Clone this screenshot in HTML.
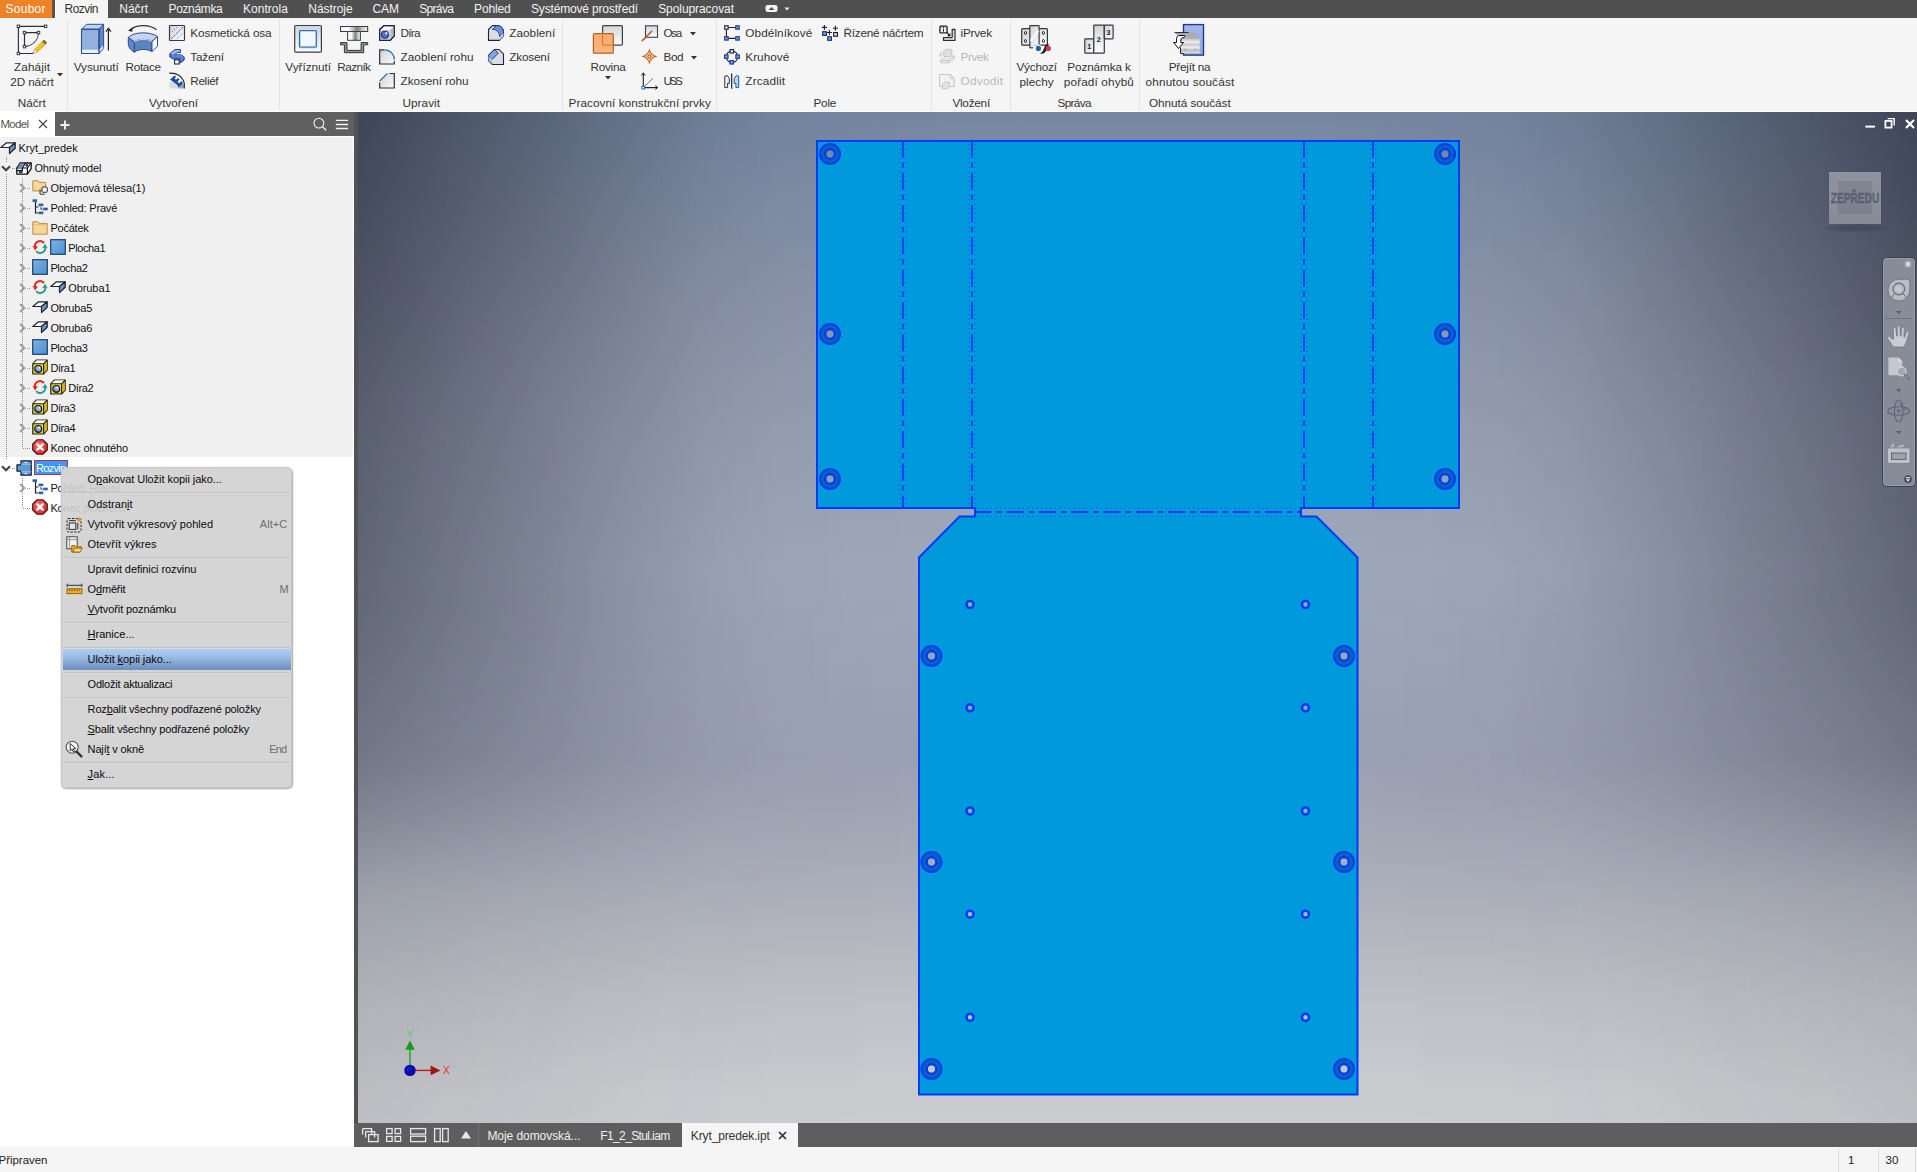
<!DOCTYPE html>
<html><head><meta charset="utf-8"><title>Autodesk Inventor</title>
<style>
*{margin:0;padding:0;box-sizing:border-box}
html,body{width:1917px;height:1172px;overflow:hidden}
body{position:relative;background:#f5f5f5;font-family:"Liberation Sans",sans-serif;color:#2a2a2a}
.t{position:absolute;white-space:nowrap}
.a{position:absolute}
svg{position:absolute;overflow:visible}
</style></head><body>

<div class="a" style="left:0;top:0;width:1917px;height:18px;background:#505050"></div>
<div class="a" style="left:0;top:0;width:52px;height:18px;background:#ee8226"></div>
<div class="a" style="left:52px;top:0;width:3px;height:18px;background:linear-gradient(to right,#8a5a30,#524e4a 60%,#505050)"></div>
<div class="a" style="left:55px;top:0;width:53px;height:19px;background:#f5f5f5;border-left:1px solid #fff"></div>
<div class="a" style="left:0;top:18px;width:1917px;height:93px;background:#f5f5f5"></div>
<div class="a" style="left:0;top:111px;width:1917px;height:1px;background:#fdfdfd"></div>
<span class="t" style="left:5.50px;top:2.16px;font-size:12px;line-height:14px;letter-spacing:0.261px;color:#fff;">Soubor</span>
<span class="t" style="left:64.50px;top:2.16px;font-size:12px;line-height:14px;letter-spacing:-0.536px;color:#333;">Rozvin</span>
<span class="t" style="left:119.20px;top:2.16px;font-size:12px;line-height:14px;letter-spacing:0.033px;color:#f2f2f2;">Náčrt</span>
<span class="t" style="left:168.50px;top:2.16px;font-size:12px;line-height:14px;letter-spacing:-0.356px;color:#f2f2f2;">Poznámka</span>
<span class="t" style="left:243.00px;top:2.16px;font-size:12px;line-height:14px;letter-spacing:0.029px;color:#f2f2f2;">Kontrola</span>
<span class="t" style="left:308.30px;top:2.16px;font-size:12px;line-height:14px;letter-spacing:-0.055px;color:#f2f2f2;">Nástroje</span>
<span class="t" style="left:372.40px;top:2.16px;font-size:12px;line-height:14px;letter-spacing:-0.033px;color:#f2f2f2;">CAM</span>
<span class="t" style="left:419.20px;top:2.16px;font-size:12px;line-height:14px;letter-spacing:-0.664px;color:#f2f2f2;">Správa</span>
<span class="t" style="left:474.10px;top:2.16px;font-size:12px;line-height:14px;letter-spacing:-0.173px;color:#f2f2f2;">Pohled</span>
<span class="t" style="left:531.00px;top:2.16px;font-size:12px;line-height:14px;letter-spacing:-0.169px;color:#f2f2f2;">Systémové prostředí</span>
<span class="t" style="left:658.20px;top:2.16px;font-size:12px;line-height:14px;letter-spacing:-0.076px;color:#f2f2f2;">Spolupracovat</span>
<svg style="left:764px;top:4px" width="30" height="10" viewBox="0 0 30 10"><rect x="1.5" y="1" width="12" height="7" rx="2.2" fill="#f4f4f4"/><path d="M4.5 6 L7.5 3 L10.5 6Z" fill="#505050"/><path d="M20.5 3.5h5l-2.5 3z" fill="#eee"/></svg>
<div class="a" style="left:67.0px;top:20px;width:1px;height:90px;background:#e3e3e3"></div>
<div class="a" style="left:278.5px;top:20px;width:1px;height:90px;background:#e3e3e3"></div>
<div class="a" style="left:561.8px;top:20px;width:1px;height:90px;background:#e3e3e3"></div>
<div class="a" style="left:716.1px;top:20px;width:1px;height:90px;background:#e3e3e3"></div>
<div class="a" style="left:931.0px;top:20px;width:1px;height:90px;background:#e3e3e3"></div>
<div class="a" style="left:1010.0px;top:20px;width:1px;height:90px;background:#e3e3e3"></div>
<div class="a" style="left:1139.0px;top:20px;width:1px;height:90px;background:#e3e3e3"></div>
<span class="t" style="left:14.10px;top:59.66px;font-size:11.75px;line-height:14px;letter-spacing:0.089px;color:#333;">Zahájit</span>
<span class="t" style="left:10.30px;top:74.96px;font-size:11.75px;line-height:14px;letter-spacing:-0.144px;color:#333;">2D náčrt</span>
<span class="t" style="left:73.70px;top:59.66px;font-size:11.75px;line-height:14px;letter-spacing:-0.026px;color:#333;">Vysunutí</span>
<span class="t" style="left:125.60px;top:59.66px;font-size:11.75px;line-height:14px;letter-spacing:-0.346px;color:#333;">Rotace</span>
<span class="t" style="left:285.30px;top:59.66px;font-size:11.75px;line-height:14px;letter-spacing:-0.028px;color:#333;">Vyříznutí</span>
<span class="t" style="left:337.30px;top:59.66px;font-size:11.75px;line-height:14px;letter-spacing:-0.574px;color:#333;">Razník</span>
<span class="t" style="left:590.60px;top:59.66px;font-size:11.75px;line-height:14px;letter-spacing:-0.295px;color:#333;">Rovina</span>
<span class="t" style="left:1016.50px;top:59.66px;font-size:11.75px;line-height:14px;letter-spacing:-0.216px;color:#333;">Výchozí</span>
<span class="t" style="left:1019.50px;top:74.96px;font-size:11.75px;line-height:14px;letter-spacing:0.047px;color:#333;">plechy</span>
<span class="t" style="left:1067.30px;top:59.66px;font-size:11.75px;line-height:14px;letter-spacing:-0.117px;color:#333;">Poznámka k</span>
<span class="t" style="left:1063.80px;top:74.96px;font-size:11.75px;line-height:14px;letter-spacing:0.137px;color:#333;">pořadí ohybů</span>
<span class="t" style="left:1168.70px;top:59.66px;font-size:11.75px;line-height:14px;letter-spacing:-0.232px;color:#333;">Přejít na</span>
<span class="t" style="left:1145.50px;top:74.96px;font-size:11.75px;line-height:14px;letter-spacing:0.176px;color:#333;">ohnutou součást</span>
<span class="t" style="left:190.30px;top:25.76px;font-size:11.75px;line-height:14px;letter-spacing:-0.126px;color:#333;">Kosmetická osa</span>
<span class="t" style="left:190.30px;top:49.66px;font-size:11.75px;line-height:14px;letter-spacing:-0.204px;color:#333;">Tažení</span>
<span class="t" style="left:190.30px;top:73.86px;font-size:11.75px;line-height:14px;letter-spacing:-0.348px;color:#333;">Reliéf</span>
<span class="t" style="left:400.60px;top:25.76px;font-size:11.75px;line-height:14px;letter-spacing:-0.766px;color:#333;">Díra</span>
<span class="t" style="left:400.60px;top:49.66px;font-size:11.75px;line-height:14px;letter-spacing:0.033px;color:#333;">Zaoblení rohu</span>
<span class="t" style="left:400.60px;top:73.86px;font-size:11.75px;line-height:14px;letter-spacing:-0.053px;color:#333;">Zkosení rohu</span>
<span class="t" style="left:509.20px;top:25.76px;font-size:11.75px;line-height:14px;letter-spacing:0.039px;color:#333;">Zaoblení</span>
<span class="t" style="left:509.20px;top:49.66px;font-size:11.75px;line-height:14px;letter-spacing:-0.166px;color:#333;">Zkosení</span>
<span class="t" style="left:663.60px;top:25.76px;font-size:11.75px;line-height:14px;letter-spacing:-1.375px;color:#333;">Osa</span>
<span class="t" style="left:663.60px;top:49.66px;font-size:11.75px;line-height:14px;letter-spacing:-0.453px;color:#333;">Bod</span>
<span class="t" style="left:663.60px;top:73.86px;font-size:11.75px;line-height:14px;letter-spacing:-2.480px;color:#333;">USS</span>
<span class="t" style="left:745.30px;top:25.76px;font-size:11.75px;line-height:14px;letter-spacing:0.093px;color:#333;">Obdélníkové</span>
<span class="t" style="left:745.30px;top:49.66px;font-size:11.75px;line-height:14px;letter-spacing:0.023px;color:#333;">Kruhové</span>
<span class="t" style="left:745.30px;top:73.86px;font-size:11.75px;line-height:14px;letter-spacing:0.168px;color:#333;">Zrcadlit</span>
<span class="t" style="left:843.40px;top:25.76px;font-size:11.75px;line-height:14px;letter-spacing:-0.211px;color:#333;">Řízené náčrtem</span>
<span class="t" style="left:960.50px;top:25.76px;font-size:11.75px;line-height:14px;letter-spacing:-0.229px;color:#333;">iPrvek</span>
<span class="t" style="left:960.50px;top:49.66px;font-size:11.75px;line-height:14px;letter-spacing:-0.384px;color:#b9b9b9;">Prvek</span>
<span class="t" style="left:960.50px;top:73.86px;font-size:11.75px;line-height:14px;letter-spacing:0.318px;color:#b9b9b9;">Odvodit</span>
<span class="t" style="left:17.70px;top:96.16px;font-size:11.75px;line-height:14px;letter-spacing:-0.018px;color:#333;">Náčrt</span>
<span class="t" style="left:149.00px;top:96.16px;font-size:11.75px;line-height:14px;letter-spacing:-0.037px;color:#333;">Vytvoření</span>
<span class="t" style="left:402.50px;top:96.16px;font-size:11.75px;line-height:14px;letter-spacing:0.047px;color:#333;">Upravit</span>
<span class="t" style="left:568.60px;top:96.16px;font-size:11.75px;line-height:14px;letter-spacing:0.046px;color:#333;">Pracovní konstrukční prvky</span>
<span class="t" style="left:813.40px;top:96.16px;font-size:11.75px;line-height:14px;letter-spacing:-0.173px;color:#333;">Pole</span>
<span class="t" style="left:952.40px;top:96.16px;font-size:11.75px;line-height:14px;letter-spacing:-0.232px;color:#333;">Vložení</span>
<span class="t" style="left:1057.50px;top:96.16px;font-size:11.75px;line-height:14px;letter-spacing:-0.646px;color:#333;">Správa</span>
<span class="t" style="left:1149.00px;top:96.16px;font-size:11.75px;line-height:14px;letter-spacing:-0.046px;color:#333;">Ohnutá součást</span>
<svg style="left:57px;top:72.5px" width="6" height="3.5" viewBox="0 0 6 3.5"><path d="M0 0h6L3 3.5z" fill="#333"/></svg>
<svg style="left:605.3px;top:76.0px" width="6" height="3.5" viewBox="0 0 6 3.5"><path d="M0 0h6L3 3.5z" fill="#333"/></svg>
<svg style="left:690.4px;top:31.5px" width="6" height="3.5" viewBox="0 0 6 3.5"><path d="M0 0h6L3 3.5z" fill="#333"/></svg>
<svg style="left:691px;top:55.5px" width="6" height="3.5" viewBox="0 0 6 3.5"><path d="M0 0h6L3 3.5z" fill="#333"/></svg>
<svg style="left:0;top:0" width="1300" height="112" viewBox="0 0 1300 112"><defs><linearGradient id="gw" x1="0" y1="0" x2="0" y2="1"><stop offset="0" stop-color="#d2d4d8"/><stop offset="1" stop-color="#fdfdfd"/></linearGradient><linearGradient id="gw2" x1="0" y1="0" x2="1" y2="1"><stop offset="0" stop-color="#cfd2d6"/><stop offset="1" stop-color="#fbfbfb"/></linearGradient><linearGradient id="gm" x1="0" y1="0" x2="1" y2="0"><stop offset="0" stop-color="#f2f2f2"/><stop offset=".3" stop-color="#fafafa"/><stop offset=".62" stop-color="#7b7e82"/><stop offset=".8" stop-color="#c9cacc"/><stop offset="1" stop-color="#ededed"/></linearGradient><linearGradient id="go" x1="0" y1="0" x2="0" y2="1"><stop offset="0" stop-color="#fbab6d"/><stop offset="1" stop-color="#fbb67e"/></linearGradient><linearGradient id="gb" x1="0" y1="0" x2="1" y2="1"><stop offset="0" stop-color="#a9bfe6"/><stop offset="1" stop-color="#86a6da"/></linearGradient><linearGradient id="gbs" x1="0" y1="0" x2="0" y2="1"><stop offset="0" stop-color="#a4b8ea"/><stop offset="1" stop-color="#8ea8e2"/></linearGradient><linearGradient id="gpen" x1="0" y1="0" x2="1" y2="1"><stop offset="0" stop-color="#ffe27a"/><stop offset=".5" stop-color="#f7c21e"/><stop offset="1" stop-color="#d49410"/></linearGradient></defs><path d="M18.4 26.3H45.6M18.4 26.3V53.5M18.4 53.5H33" stroke="#2d3036" stroke-width="1.15" fill="none"/><path d="M24.5 32.6H38.5M24.5 32.6V46.6" stroke="#2d3036" stroke-width="1.15" fill="none"/><path d="M38.5 32.6C38.3 40 33 46 24.5 46.6" stroke="#5b6068" stroke-width="1.1" fill="none"/><rect x="17.15" y="25.05" width="2.5" height="2.5" fill="#f5f5f5" stroke="#2d3036" stroke-width=".9"/><rect x="44.35" y="25.05" width="2.5" height="2.5" fill="#f5f5f5" stroke="#2d3036" stroke-width=".9"/><rect x="17.15" y="52.25" width="2.5" height="2.5" fill="#f5f5f5" stroke="#2d3036" stroke-width=".9"/><rect x="23.25" y="31.35" width="2.5" height="2.5" fill="#f5f5f5" stroke="#2d3036" stroke-width=".9"/><rect x="37.25" y="31.35" width="2.5" height="2.5" fill="#f5f5f5" stroke="#2d3036" stroke-width=".9"/><rect x="23.25" y="45.35" width="2.5" height="2.5" fill="#f5f5f5" stroke="#2d3036" stroke-width=".9"/><path d="M33 53.3L34.2 49.6L43.2 40.5L46.3 43.4L37 52.4Z" fill="url(#gpen)" stroke="#b9821a" stroke-width=".5"/><path d="M33 53.3L34.2 49.6L37 52.4Z" fill="#fff" stroke="#999" stroke-width=".4"/><path d="M33 53.3l.5-1.400l1 .9z" fill="#333"/><path d="M42 41.700L43.400 40.300A1 1 0 0 1 44.800 40.300L46.500 42A1 1 0 0 1 46.500 43.300L45.100 44.600Z" fill="#a0622a"/><path d="M81.500 29.300L86.500 24.300H103.600L99 29.300Z" fill="#c3d3ec" stroke="#2a4f95" stroke-width="1" stroke-linejoin="round"/><path d="M99 29.300L103.600 24.300V48.500L99 53.500Z" fill="#5f88c6" stroke="#2a4f95" stroke-width="1" stroke-linejoin="round"/><rect x="81.500" y="29.300" width="17.500" height="24.200" fill="#93b1de" stroke="#2a4f95" stroke-width="1" stroke-linejoin="round"/><path d="M82 49.700H98.600V53H82Z" fill="#e9eff9"/><path d="M99.400 49.400L103.200 45.400V48.300L99.400 52.600Z" fill="#dfe7f4"/><rect x="81.500" y="29.300" width="17.500" height="24.200" fill="none" stroke="#2a4f95" stroke-width="1.1" rx=".6"/><path d="M108.400 50.600V30" stroke="#222" stroke-width="1.200"/><path d="M105.900 31.600L108.400 28.300L110.900 31.600" fill="none" stroke="#222" stroke-width="1.200"/><path d="M156.600 29.800C150 24.300 137 24 130.500 29.600" fill="none" stroke="#333" stroke-width="1.200"/><path d="M128 30.800L132.800 27.200L132.200 31.800Z" fill="#222"/><path d="M128.300 37.500C133 31.800 150 31.200 157.500 36.500L152 41.500C147 38.500 138 38.800 134.400 42Z" fill="#c6d5ee" stroke="#2a4f95" stroke-width="1" stroke-linejoin="round"/><path d="M128.300 37.500L134.400 42V52.200C131 50.500 128.600 47.500 128.300 44.500Z" fill="#5f88c6" stroke="#2a4f95" stroke-width="1" stroke-linejoin="round"/><path d="M134.400 42C138 38.800 147 38.500 152 41.500V51.500C147 48.600 138.500 48.800 134.400 52.200Z" fill="#5b83c0" stroke="#2a4f95" stroke-width="1" stroke-linejoin="round"/><path d="M152 41.500L157.500 36.500V46.200L152 51.500Z" fill="#fdfdfd" stroke="#2a4f95" stroke-width="1" stroke-linejoin="round"/><path d="M134.400 42C138 38.800 147 38.500 152 41.500" fill="none" stroke="#e4ecf8" stroke-width=".9"/><rect x="169.500" y="25.500" width="15" height="15" rx=".8" fill="url(#gw2)" stroke="#2f3a55" stroke-width="1.200"/><path d="M171 39L183.300 26.800" stroke="#3d5a99" stroke-width=".95" stroke-dasharray="2.400 1.200"/><path d="M172 32L177 27M177.500 38.500L182.800 33" stroke="#3d5a99" stroke-width=".9" stroke-dasharray=".9 1.900"/><path d="M170 53.500L175 49.500H180.500V52.500H177.500L174.500 54.800H181L184 56.800V60L180 63V58.800H173.200L170 57Z" fill="#9db7e8" stroke="#2247a0" stroke-width="1" stroke-linejoin="round"/><path d="M170 53.500V57L173.200 58.800H180V63L184 60V56.800" fill="#4f78c8" stroke="#2247a0" stroke-width=".9" stroke-linejoin="round" fill-opacity=".85"/><rect x="174.600" y="59.800" width="4.600" height="4.200" fill="#fff" stroke="#1d2a4a" stroke-width="1.100"/><path d="M169.200 73.200C176 72.600 182.500 76 184.300 83.500V88.500H181C180 83 176 79.500 169.500 80Z" fill="#fff" stroke="none"/><path d="M169.300 86.500V82C173 81.500 176.500 84 177.800 88.600H171Z" fill="#d9dadd"/><path d="M178 88.600C177 84.500 180 82.500 184.300 84.500V88.600Z" fill="#9aa4b8"/><path d="M169.200 73.200C176 72.600 182.500 76 184.300 83.500V88.500" fill="none" stroke="#1e2230" stroke-width="1.100"/><path d="M170 79.500L174.500 75.500L176.300 76.800L174.500 78.600L176 79.800L178 78L179.600 79.600L177.600 81.600L179 83.200L181.500 81L183 83.500L178.500 87.200L176.600 84.600Z" fill="#1d4f9f"/><rect x="294.700" y="25.500" width="26.700" height="26.700" rx="1.200" fill="url(#gw)" stroke="#3a3d44" stroke-width="1.200"/><rect x="299.600" y="30.700" width="16.700" height="16.500" rx=".8" fill="#f2f7fd" stroke="#2a6aa8" stroke-width="1.300"/><rect x="298.500" y="29.600" width="18.900" height="18.700" rx="1.400" fill="none" stroke="#bfe0fa" stroke-width=".9" opacity=".8"/><rect x="340.500" y="26.500" width="27.200" height="5" fill="url(#gm)" stroke="#3a3d44" stroke-width="1"/><rect x="347.600" y="31.500" width="12.800" height="8.800" fill="url(#gm)" stroke="#3a3d44" stroke-width="1"/><path d="M340.500 42.600H347V50.400H361.100V42.600H367.700V44.800H363.700V52.700H344.400V44.800H340.500Z" fill="#8f9296" stroke="#33363c" stroke-width="1" stroke-linejoin="round"/><path d="M379.700 29.500L384 25.600H394.300V35.800L390.200 40.300H379.700Z" fill="#fcfcfd" stroke="#232838" stroke-width="1.200" stroke-linejoin="round"/><path d="M390.200 29.700L394.300 25.600V35.800L390.200 40.300Z" fill="#b9bcc2"/><rect x="380.300" y="29.800" width="9.700" height="10" fill="#c8cff0"/><circle cx="384.900" cy="34.700" r="3.500" fill="#5872c0" stroke="#1d2f80" stroke-width="1.100"/><circle cx="386.400" cy="33.300" r="1.100" fill="#fff"/><path d="M379.700 29.500L384 25.600H394.300V35.800L390.200 40.300H379.700Z" fill="none" stroke="#232838" stroke-width="1.200" stroke-linejoin="round"/><path d="M379.700 49.800H384.500C390 49.800 394.300 54 394.300 59.500V64H379.700Z" fill="url(#gw2)"/><path d="M384.500 49.800H379.700V64H394.300V61" fill="none" stroke="#2b2f3a" stroke-width="1.200"/><path d="M384.800 49.800C390 49.800 394.300 54 394.300 59.800" fill="none" stroke="#2a6aa8" stroke-width="1.300"/><path d="M379.700 81L387.500 73.500H394.300V88H379.700Z" fill="url(#gw2)"/><path d="M389.500 73.500H394.300V88H379.700V82.500" fill="none" stroke="#2b2f3a" stroke-width="1.200"/><path d="M379.700 81L387.500 73.400" fill="none" stroke="#2a6aa8" stroke-width="1.300"/><path d="M488.500 29.500L492.500 25.600H497C501 25.600 503.500 28.500 503.500 32.500V36.200L499.500 40.400H488.500Z" fill="#dcdde1" stroke="#1c2440" stroke-width="1.100" stroke-linejoin="round"/><path d="M492.500 29.300L496.500 25.600C501 25.400 503.600 28.500 503.500 32.800L499.600 36.800C499.600 32.500 497 29.600 492.500 29.300Z" fill="#6f92d6" stroke="#1c3c98" stroke-width="1"/><path d="M499.600 36.800L503.500 32.800V36.200L499.500 40.400Z" fill="#b9c6e6"/><path d="M488.500 55.500L494.500 49.500H499L503.500 54V64.500H492.500L488.500 60.500Z" fill="#dcdde1" stroke="#1c2440" stroke-width="1.100" stroke-linejoin="round"/><path d="M488.500 55.500L494.500 49.500L498.300 53L492.300 59.300Z" fill="#86a6e2" stroke="#1c3c98" stroke-width="1"/><path d="M488.500 55.500L492.300 59.300V64.300L488.500 60.500Z" fill="#a9bfe6"/><path d="M499 49.500L503.500 54" stroke="#fff" stroke-width=".4"/><rect x="602.600" y="25.600" width="19.800" height="19.500" rx="1" fill="url(#gw)" stroke="#3c4048" stroke-width="1.200"/><rect x="593.400" y="33.700" width="19.900" height="19.500" rx="1" fill="url(#go)" stroke="#b8601f" stroke-width="1.200"/><path d="M602.600 34.500V45.100H612.800" fill="none" stroke="#c9722f" stroke-width="1"/><rect x="645.500" y="25.800" width="12" height="11.500" fill="url(#gw)" stroke="#3c4048" stroke-width="1.100"/><path d="M642.300 40.600L651.700 31.300" stroke="#b85c30" stroke-width="1.600" stroke-linecap="round"/><path d="M649.400 50.600Q651.300 54.500 655.300 56.400Q651.300 58.300 649.400 62.200Q647.500 58.300 643.500 56.400Q647.500 54.500 649.400 50.600Z" fill="#fbb074" stroke="#b8601f" stroke-width="1"/><path d="M649.400 49V51.500M649.400 63.800V61.300M642 56.400H644.500M656.800 56.400H654.300" stroke="#b8601f" stroke-width="1"/><circle cx="649.400" cy="56.400" r="1.300" fill="#fff" stroke="#8a3f10" stroke-width=".9"/><path d="M643.300 87.600V73.500M643.300 87.600H657" stroke="#222" stroke-width="1.100" fill="none"/><path d="M641.500 75.500L643.300 72.800L645.100 75.500M655.300 85.800L657.800 87.600L655.300 89.400" stroke="#222" stroke-width="1" fill="none"/><path d="M643.300 87.600L652.900 78.300" stroke="#333" stroke-width=".7"/><rect x="641.900" y="86.200" width="2.800" height="2.800" fill="#fff" stroke="#1c6ab0" stroke-width="1"/><path d="M726.400 27.500H737.500M726.400 27.500V38.400M726.400 38.400H737.500" stroke="#222" stroke-width="1.100"/><rect x="724.70" y="25.80" width="3.4" height="3.4" fill="#fff" stroke="#1a2a55" stroke-width="1.2"/><rect x="735.80" y="25.80" width="3.4" height="3.4" fill="#8aa9e8" stroke="#1e3f8f" stroke-width="1.2"/><rect x="724.70" y="36.70" width="3.4" height="3.4" fill="#8aa9e8" stroke="#1e3f8f" stroke-width="1.2"/><rect x="735.80" y="36.70" width="3.4" height="3.4" fill="#8aa9e8" stroke="#1e3f8f" stroke-width="1.2"/><circle cx="732" cy="56.800" r="5.800" fill="none" stroke="#222" stroke-width="1.100"/><rect x="730.10" y="49.60" width="3.4" height="3.4" fill="#fff" stroke="#1a2a55" stroke-width="1.2"/><rect x="724.60" y="54.90" width="3.4" height="3.4" fill="#8aa9e8" stroke="#1e3f8f" stroke-width="1.2"/><rect x="735.90" y="54.90" width="3.4" height="3.4" fill="#8aa9e8" stroke="#1e3f8f" stroke-width="1.2"/><rect x="729.90" y="60.60" width="3.4" height="3.4" fill="#8aa9e8" stroke="#1e3f8f" stroke-width="1.2"/><path d="M731.700 73.400V88.800" stroke="#111" stroke-width="1.100"/><path d="M724.800 87.600V76.200L727.300 75.600L729.300 78.500V83.500L727.600 83.200V87.600Z" fill="#f4f4f8" stroke="#2b2f3a" stroke-width="1" stroke-linejoin="round"/><path d="M738.700 87.600V76.200L736.200 75.600L734.200 78.500V83.500L735.900 83.200V87.600Z" fill="#b5d8f4" stroke="#1c5a9c" stroke-width="1" stroke-linejoin="round"/><path d="M821.900 27.400H826.900M824.400 24.900V29.900M826.900 32.500H831.900M829.400 30V35M832.900 28.300H837.900M835.400 25.800V30.800" stroke="#222" stroke-width="1.100"/><rect x="822.700" y="31.700" width="3.600" height="3.700" fill="#8aa9f0" stroke="#12307c" stroke-width="1.200"/><rect x="827.800" y="36.800" width="3.600" height="3.500" fill="#8aa9f0" stroke="#12307c" stroke-width="1.200"/><rect x="833.700" y="32.600" width="3.700" height="3.600" fill="#fbfbff" stroke="#141b33" stroke-width="1.200"/><rect x="939.900" y="26.100" width="7.200" height="6.800" rx=".9" fill="url(#gw)" stroke="#222" stroke-width="1.300"/><path d="M943.500 29.200V31.700" stroke="#111" stroke-width="1"/><circle cx="943.500" cy="27.700" r=".6" fill="#111"/><path d="M952.200 29.400H955V40.300H943.500V37.600H952.200Z" fill="url(#gw)" stroke="#2a2a2e" stroke-width="1.200" stroke-linejoin="round"/><path d="M946.500 32.200L949.500 35.200" stroke="#111" stroke-width="1.100"/><path d="M950.400 33V36.200H947.200Z" fill="#111"/><path d="M940.500 60.500L946 56H954.500L949 60.500ZM940.500 60.500V62.800H949V60.500M949 62.800L954.500 58.300V56" fill="#ebebeb" stroke="#c4c4c4" stroke-width=".9" stroke-linejoin="round"/><path d="M943.800 50.800L945.800 49.200H951.800V54.800L949.800 56.500H943.800Z" fill="#dedede" stroke="#c4c4c4" stroke-width=".9" stroke-linejoin="round"/><path d="M943 53H940.500V56.500M939.200 55.300L940.500 56.800L941.800 55.300" fill="none" stroke="#c4c4c4" stroke-width=".9"/><path d="M939.600 74.500H950.500L954.300 78.500V86.500H948M939.600 74.500V86.500H942" fill="#f0f0f0" stroke="#c4c4c4" stroke-width="1"/><path d="M950.500 74.500V78.500H954.300" fill="none" stroke="#c4c4c4" stroke-width=".9"/><path d="M942.500 84L944.300 82.300H949.300V87L947.500 88.700H942.500Z" fill="#e2e2e2" stroke="#c4c4c4" stroke-width=".9" stroke-linejoin="round"/><rect x="1021.700" y="28.700" width="25.700" height="16.500" rx="1" fill="url(#gw2)" stroke="#33363c" stroke-width="1.200"/><path d="M1029.800 47.800V26.400A.8 .8 0 0 1 1030.600 25.600H1038.300A.8 .8 0 0 1 1039.100 26.400V44" fill="url(#gw2)" stroke="#33363c" stroke-width="1.200"/><path d="M1029.800 47.800H1033" stroke="#33363c" stroke-width="1.200"/><path d="M1030.600 41L1038.400 30.500" stroke="#fff" stroke-width="2.400" opacity=".75"/><ellipse cx="1025.5" cy="33" rx="1.100" ry="1.500" fill="none" stroke="#222" stroke-width=".9"/><ellipse cx="1025.5" cy="41" rx="1.100" ry="1.500" fill="none" stroke="#222" stroke-width=".9"/><ellipse cx="1043.4" cy="33" rx="1.100" ry="1.500" fill="none" stroke="#222" stroke-width=".9"/><ellipse cx="1043.4" cy="41" rx="1.100" ry="1.500" fill="none" stroke="#222" stroke-width=".9"/><circle cx="1038.400" cy="48.400" r="3.600" fill="#f5f5f5"/><circle cx="1038.400" cy="48.400" r="2.600" fill="#1e62a8"/><path d="M1049.300 44.400C1042.500 43.600 1045.500 52.300 1039.600 53.600C1047.500 55 1046 47 1049.300 44.400Z" fill="#161a22"/><circle cx="1048.300" cy="48.400" r="2.600" fill="#d8344a"/><rect x="1084.800" y="38.900" width="9" height="14.300" rx=".8" fill="url(#gw2)" stroke="#33363c" stroke-width="1.200"/><rect x="1093.800" y="25.100" width="10.500" height="28.100" rx=".8" fill="url(#gw)" stroke="#33363c" stroke-width="1.200"/><rect x="1104.300" y="25.100" width="8.800" height="13.800" rx=".8" fill="url(#gw2)" stroke="#33363c" stroke-width="1.200"/><g font-family="Liberation Sans, sans-serif" font-size="7.200" fill="#222" font-weight="bold"><text x="1087.300" y="48.800">1</text><text x="1096.800" y="41.700">2</text><text x="1106.500" y="34.700">3</text></g><rect x="1183.500" y="24.600" width="20" height="30.500" fill="url(#gbs)" stroke="#1e3a8a" stroke-width="1.400"/><circle cx="1188.600" cy="28.500" r=".9" fill="#fff" stroke="#5b74c0" stroke-width=".5"/><circle cx="1198.500" cy="28.500" r=".9" fill="#fff" stroke="#5b74c0" stroke-width=".5"/><path d="M1174.400 32.300H1193.500L1199.800 38.500H1182L1176.500 34.500Z" fill="#a9abad"/><path d="M1174.400 32.500H1188.500" stroke="#1a2033" stroke-width=".9"/><path d="M1174.400 32.500L1176.800 34.800H1184" fill="#9db0d6" stroke="none"/><defs><linearGradient id="gfold" x1="0" y1="0" x2="0" y2="1"><stop offset="0" stop-color="#bdbdbd"/><stop offset=".25" stop-color="#f1efef"/><stop offset=".42" stop-color="#c9c7c7"/><stop offset=".6" stop-color="#efeded"/><stop offset=".8" stop-color="#bdbdbd"/><stop offset="1" stop-color="#e3e3e3"/></linearGradient></defs><rect x="1180.500" y="38.500" width="19.300" height="14.800" fill="url(#gfold)"/><path d="M1180.500 47.500V53.500H1183.400" fill="none" stroke="#1a2033" stroke-width="1"/><path d="M1185.300 49.400h.1M1195.400 49.400h.1" stroke="#8d8d8d" stroke-width="1.400" stroke-linecap="round"/><path d="M1178.500 35.500H1184.600C1185 37 1184 37.600 1182.500 37.800C1181 38.200 1180.800 39.500 1180.800 41V42.500H1183.600L1178.500 48.500L1173.600 42.500H1176.500V40C1176.500 37.500 1177 36 1178.500 35.500Z" fill="#fdfdfd" stroke="#111" stroke-width="1" stroke-linejoin="round"/></svg>
<div class="a" style="left:0;top:112px;width:354px;height:24px;background:#5f5f5f"></div>
<div class="a" style="left:0;top:112px;width:55px;height:24px;background:#fff"></div>
<span class="t" style="left:0.50px;top:117.16px;font-size:11.5px;line-height:14px;letter-spacing:-0.705px;color:#555;">Model</span>
<svg style="left:38px;top:119px" width="10" height="10" viewBox="0 0 10 10"><path d="M1 1L9 9M9 1L1 9" stroke="#444" stroke-width="1.1"/></svg>
<svg style="left:60px;top:119.5px" width="10" height="10" viewBox="0 0 10 10"><path d="M5 0.5v9M0.5 5h9" stroke="#f2f2f2" stroke-width="1.9"/></svg>
<svg style="left:312px;top:116px" width="40" height="16" viewBox="0 0 40 16" fill="none" stroke="#f2f2f2"><circle cx="6.9" cy="7.1" r="4.9" stroke-width="1.1"/><path d="M10.5 10.7L14.2 14.3" stroke-width="1.3"/><path d="M23.8 4.4h12.3M23.8 8.5h12.3M23.8 12.5h12.3" stroke-width="1.4"/></svg>
<div class="a" style="left:0;top:136px;width:354px;height:1011px;background:#fff"></div>
<div class="a" style="left:0;top:137px;width:353px;height:320px;background:#f0f0f0"></div>
<div class="a" style="left:6px;top:157px;width:1px;height:5px;background:repeating-linear-gradient(to bottom,#8c8c8c 0 1px,transparent 1px 2px)"></div>
<div class="a" style="left:6px;top:174px;width:1px;height:286px;background:repeating-linear-gradient(to bottom,#8c8c8c 0 1px,transparent 1px 2px)"></div>
<div class="a" style="left:12px;top:168px;width:4px;height:1px;background:repeating-linear-gradient(to right,#8c8c8c 0 1px,transparent 1px 2px)"></div>
<div class="a" style="left:12px;top:468px;width:4px;height:1px;background:repeating-linear-gradient(to right,#8c8c8c 0 1px,transparent 1px 2px)"></div>
<div class="a" style="left:22px;top:178px;width:1px;height:270px;background:repeating-linear-gradient(to bottom,#8c8c8c 0 1px,transparent 1px 2px)"></div>
<div class="a" style="left:22px;top:478px;width:1px;height:30px;background:repeating-linear-gradient(to bottom,#8c8c8c 0 1px,transparent 1px 2px)"></div>
<div class="a" style="left:27px;top:188px;width:4px;height:1px;background:repeating-linear-gradient(to right,#8c8c8c 0 1px,transparent 1px 2px)"></div>
<div class="a" style="left:27px;top:208px;width:4px;height:1px;background:repeating-linear-gradient(to right,#8c8c8c 0 1px,transparent 1px 2px)"></div>
<div class="a" style="left:27px;top:228px;width:4px;height:1px;background:repeating-linear-gradient(to right,#8c8c8c 0 1px,transparent 1px 2px)"></div>
<div class="a" style="left:27px;top:248px;width:4px;height:1px;background:repeating-linear-gradient(to right,#8c8c8c 0 1px,transparent 1px 2px)"></div>
<div class="a" style="left:27px;top:268px;width:4px;height:1px;background:repeating-linear-gradient(to right,#8c8c8c 0 1px,transparent 1px 2px)"></div>
<div class="a" style="left:27px;top:288px;width:4px;height:1px;background:repeating-linear-gradient(to right,#8c8c8c 0 1px,transparent 1px 2px)"></div>
<div class="a" style="left:27px;top:308px;width:4px;height:1px;background:repeating-linear-gradient(to right,#8c8c8c 0 1px,transparent 1px 2px)"></div>
<div class="a" style="left:27px;top:328px;width:4px;height:1px;background:repeating-linear-gradient(to right,#8c8c8c 0 1px,transparent 1px 2px)"></div>
<div class="a" style="left:27px;top:348px;width:4px;height:1px;background:repeating-linear-gradient(to right,#8c8c8c 0 1px,transparent 1px 2px)"></div>
<div class="a" style="left:27px;top:368px;width:4px;height:1px;background:repeating-linear-gradient(to right,#8c8c8c 0 1px,transparent 1px 2px)"></div>
<div class="a" style="left:27px;top:388px;width:4px;height:1px;background:repeating-linear-gradient(to right,#8c8c8c 0 1px,transparent 1px 2px)"></div>
<div class="a" style="left:27px;top:408px;width:4px;height:1px;background:repeating-linear-gradient(to right,#8c8c8c 0 1px,transparent 1px 2px)"></div>
<div class="a" style="left:27px;top:428px;width:4px;height:1px;background:repeating-linear-gradient(to right,#8c8c8c 0 1px,transparent 1px 2px)"></div>
<div class="a" style="left:23px;top:448px;width:8px;height:1px;background:repeating-linear-gradient(to right,#8c8c8c 0 1px,transparent 1px 2px)"></div>
<div class="a" style="left:27px;top:488px;width:4px;height:1px;background:repeating-linear-gradient(to right,#8c8c8c 0 1px,transparent 1px 2px)"></div>
<div class="a" style="left:23px;top:508px;width:8px;height:1px;background:repeating-linear-gradient(to right,#8c8c8c 0 1px,transparent 1px 2px)"></div>
<span class="t" style="left:18.40px;top:142.25px;font-size:11px;line-height:13px;letter-spacing:-0.001px;color:#111;">Kryt_predek</span>
<svg style="left:0px;top:140px" width="16" height="16" viewBox="0 0 16 16"><defs><linearGradient id="gfl" x1="0" y1="0" x2="1" y2="1"><stop offset="0" stop-color="#9cc0e8"/><stop offset="1" stop-color="#2f69b0"/></linearGradient></defs><path d="M0.8 7.5L6.5 2.8H15.2L9.5 7.5z" fill="#fdfdfd" stroke="#1c2330" stroke-width="1.2" stroke-linejoin="round"/><path d="M9.5 7.5L15.2 2.8V8.2L9.5 13.6z" fill="url(#gfl)" stroke="#1c2330" stroke-width="1.2" stroke-linejoin="round"/></svg>
<span class="t" style="left:34.40px;top:162.25px;font-size:11px;line-height:13px;letter-spacing:-0.135px;color:#111;">Ohnutý model</span>
<svg style="left:1px;top:165px" width="10" height="7" viewBox="0 0 10 7"><path d="M1 1.2L5 5.2L9 1.2" fill="none" stroke="#454545" stroke-width="2.2"/></svg>
<svg style="left:16.3px;top:160px" width="16" height="16" viewBox="0 0 16 16"><path d="M0.8 8L4 3H15.2V8.600L11.400 14.200H0.8z" fill="#fff" stroke="#111" stroke-width="1.3" stroke-linejoin="round"/><path d="M0.8 8H11.400V14.200M11.400 8L15.200 3M6.400 8L9.400 3M6.400 8v2.600H0.800" fill="none" stroke="#111" stroke-width="1.200"/><circle cx="4.800" cy="11.700" r="1.400" fill="#2b5fa8" stroke="#111" stroke-width="1"/><circle cx="10.800" cy="5.300" r="1.100" fill="#2b5fa8" stroke="#111" stroke-width=".8"/><path d="M1.500 7.500L4.300 3.600H8.600L6 7.500z" fill="#5d8fd0"/></svg>
<span class="t" style="left:50.40px;top:182.25px;font-size:11px;line-height:13px;letter-spacing:-0.064px;color:#111;">Objemová tělesa(1)</span>
<svg style="left:19px;top:183px" width="7" height="10" viewBox="0 0 7 10"><path d="M1.2 1L5.2 5L1.2 9" fill="none" stroke="#9c9c9c" stroke-width="2.1"/></svg>
<svg style="left:32px;top:179px" width="16" height="16" viewBox="0 0 16 16"><path d="M0.8 1.8h5.2l1.2 1.6h6.5v8.6H0.8z" fill="#f6d797" stroke="#b98f45" stroke-width="1"/><rect x="10" y="8" width="5.3" height="5.3" rx="1" fill="#f4f4f4" stroke="#333" stroke-width="1"/><path d="M8 10.5v4.7h4.7" fill="none" stroke="#333" stroke-width="1"/></svg>
<span class="t" style="left:50.40px;top:202.25px;font-size:11px;line-height:13px;letter-spacing:-0.183px;color:#111;">Pohled: Pravé</span>
<svg style="left:19px;top:203px" width="7" height="10" viewBox="0 0 7 10"><path d="M1.2 1L5.2 5L1.2 9" fill="none" stroke="#9c9c9c" stroke-width="2.1"/></svg>
<svg style="left:32px;top:199px" width="16" height="16" viewBox="0 0 16 16"><path d="M3.5 3v11h2.5M3.5 8h3M3.5 3h1" fill="none" stroke="#222" stroke-width="1.2"/><rect x="0.5" y="0.3" width="4.6" height="2.6" fill="#2b5fa8"/><rect x="6.5" y="4.6" width="4.8" height="2.6" fill="#2b5fa8"/><rect x="11.2" y="8.7" width="4.6" height="2.6" fill="#2b5fa8"/><rect x="6.5" y="12.6" width="4.8" height="2.6" fill="#2b5fa8"/><path d="M9 8.2v2h1.5" fill="none" stroke="#222" stroke-width="1"/></svg>
<span class="t" style="left:50.40px;top:222.25px;font-size:11px;line-height:13px;letter-spacing:-0.224px;color:#111;">Počátek</span>
<svg style="left:19px;top:223px" width="7" height="10" viewBox="0 0 7 10"><path d="M1.2 1L5.2 5L1.2 9" fill="none" stroke="#9c9c9c" stroke-width="2.1"/></svg>
<svg style="left:32px;top:219px" width="16" height="16" viewBox="0 0 16 16"><path d="M0.8 2.8h5.2l1.2 1.6h8v10.8H0.8z" fill="#f6d797" stroke="#b98f45" stroke-width="1"/><path d="M0.8 5.6h14.4" stroke="#e2bb6c" stroke-width="1"/></svg>
<span class="t" style="left:68.20px;top:242.25px;font-size:11px;line-height:13px;letter-spacing:-0.375px;color:#111;">Plocha1</span>
<svg style="left:19px;top:243px" width="7" height="10" viewBox="0 0 7 10"><path d="M1.2 1L5.2 5L1.2 9" fill="none" stroke="#9c9c9c" stroke-width="2.1"/></svg>
<svg style="left:32px;top:239px" width="16" height="16" viewBox="0 0 16 16"><path d="M3.2 8.6A5 5 0 0 1 12 4.2" fill="none" stroke="#e8241f" stroke-width="2"/><path d="M0.6 6.9L5.9 7.5L3 11.4z" fill="#e8241f"/><path d="M13 7.6A5 5 0 0 1 4.2 12" fill="none" stroke="#2d9b8e" stroke-width="2"/><path d="M15.6 9.300L10.300 8.700L13.200 4.800z" fill="#2d9b8e"/></svg>
<svg style="left:50px;top:239px" width="16" height="16" viewBox="0 0 16 16"><defs><linearGradient id="gf" x1="0" y1="0" x2="1" y2="1"><stop offset="0" stop-color="#7db4e6"/><stop offset="1" stop-color="#4a8fd0"/></linearGradient></defs><rect x="0.7" y="0.7" width="14.6" height="14.6" fill="url(#gf)" stroke="#1d3f66" stroke-width="1.2"/></svg>
<span class="t" style="left:50.40px;top:262.25px;font-size:11px;line-height:13px;letter-spacing:-0.392px;color:#111;">Plocha2</span>
<svg style="left:19px;top:263px" width="7" height="10" viewBox="0 0 7 10"><path d="M1.2 1L5.2 5L1.2 9" fill="none" stroke="#9c9c9c" stroke-width="2.1"/></svg>
<svg style="left:32px;top:259px" width="16" height="16" viewBox="0 0 16 16"><defs><linearGradient id="gf" x1="0" y1="0" x2="1" y2="1"><stop offset="0" stop-color="#7db4e6"/><stop offset="1" stop-color="#4a8fd0"/></linearGradient></defs><rect x="0.7" y="0.7" width="14.6" height="14.6" fill="url(#gf)" stroke="#1d3f66" stroke-width="1.2"/></svg>
<span class="t" style="left:68.20px;top:282.25px;font-size:11px;line-height:13px;letter-spacing:-0.068px;color:#111;">Obruba1</span>
<svg style="left:19px;top:283px" width="7" height="10" viewBox="0 0 7 10"><path d="M1.2 1L5.2 5L1.2 9" fill="none" stroke="#9c9c9c" stroke-width="2.1"/></svg>
<svg style="left:32px;top:279px" width="16" height="16" viewBox="0 0 16 16"><path d="M3.2 8.6A5 5 0 0 1 12 4.2" fill="none" stroke="#e8241f" stroke-width="2"/><path d="M0.6 6.9L5.9 7.5L3 11.4z" fill="#e8241f"/><path d="M13 7.6A5 5 0 0 1 4.2 12" fill="none" stroke="#2d9b8e" stroke-width="2"/><path d="M15.6 9.300L10.300 8.700L13.200 4.800z" fill="#2d9b8e"/></svg>
<svg style="left:50px;top:279px" width="16" height="16" viewBox="0 0 16 16"><defs><linearGradient id="gfl" x1="0" y1="0" x2="1" y2="1"><stop offset="0" stop-color="#9cc0e8"/><stop offset="1" stop-color="#2f69b0"/></linearGradient></defs><path d="M0.8 7.5L6.5 2.8H15.2L9.5 7.5z" fill="#fdfdfd" stroke="#1c2330" stroke-width="1.2" stroke-linejoin="round"/><path d="M9.5 7.5L15.2 2.8V8.2L9.5 13.6z" fill="url(#gfl)" stroke="#1c2330" stroke-width="1.2" stroke-linejoin="round"/></svg>
<span class="t" style="left:50.40px;top:302.25px;font-size:11px;line-height:13px;letter-spacing:-0.118px;color:#111;">Obruba5</span>
<svg style="left:19px;top:303px" width="7" height="10" viewBox="0 0 7 10"><path d="M1.2 1L5.2 5L1.2 9" fill="none" stroke="#9c9c9c" stroke-width="2.1"/></svg>
<svg style="left:32px;top:299px" width="16" height="16" viewBox="0 0 16 16"><defs><linearGradient id="gfl" x1="0" y1="0" x2="1" y2="1"><stop offset="0" stop-color="#9cc0e8"/><stop offset="1" stop-color="#2f69b0"/></linearGradient></defs><path d="M0.8 7.5L6.5 2.8H15.2L9.5 7.5z" fill="#fdfdfd" stroke="#1c2330" stroke-width="1.2" stroke-linejoin="round"/><path d="M9.5 7.5L15.2 2.8V8.2L9.5 13.6z" fill="url(#gfl)" stroke="#1c2330" stroke-width="1.2" stroke-linejoin="round"/></svg>
<span class="t" style="left:50.40px;top:322.25px;font-size:11px;line-height:13px;letter-spacing:-0.118px;color:#111;">Obruba6</span>
<svg style="left:19px;top:323px" width="7" height="10" viewBox="0 0 7 10"><path d="M1.2 1L5.2 5L1.2 9" fill="none" stroke="#9c9c9c" stroke-width="2.1"/></svg>
<svg style="left:32px;top:319px" width="16" height="16" viewBox="0 0 16 16"><defs><linearGradient id="gfl" x1="0" y1="0" x2="1" y2="1"><stop offset="0" stop-color="#9cc0e8"/><stop offset="1" stop-color="#2f69b0"/></linearGradient></defs><path d="M0.8 7.5L6.5 2.8H15.2L9.5 7.5z" fill="#fdfdfd" stroke="#1c2330" stroke-width="1.2" stroke-linejoin="round"/><path d="M9.5 7.5L15.2 2.8V8.2L9.5 13.6z" fill="url(#gfl)" stroke="#1c2330" stroke-width="1.2" stroke-linejoin="round"/></svg>
<span class="t" style="left:50.40px;top:342.25px;font-size:11px;line-height:13px;letter-spacing:-0.392px;color:#111;">Plocha3</span>
<svg style="left:19px;top:343px" width="7" height="10" viewBox="0 0 7 10"><path d="M1.2 1L5.2 5L1.2 9" fill="none" stroke="#9c9c9c" stroke-width="2.1"/></svg>
<svg style="left:32px;top:339px" width="16" height="16" viewBox="0 0 16 16"><defs><linearGradient id="gf" x1="0" y1="0" x2="1" y2="1"><stop offset="0" stop-color="#7db4e6"/><stop offset="1" stop-color="#4a8fd0"/></linearGradient></defs><rect x="0.7" y="0.7" width="14.6" height="14.6" fill="url(#gf)" stroke="#1d3f66" stroke-width="1.2"/></svg>
<span class="t" style="left:50.40px;top:362.25px;font-size:11px;line-height:13px;letter-spacing:-0.425px;color:#111;">Díra1</span>
<svg style="left:19px;top:363px" width="7" height="10" viewBox="0 0 7 10"><path d="M1.2 1L5.2 5L1.2 9" fill="none" stroke="#9c9c9c" stroke-width="2.1"/></svg>
<svg style="left:32px;top:359px" width="16" height="16" viewBox="0 0 16 16"><path d="M0.8 4.8L4.4 1H15.2V11.2L11.6 15H0.8z" fill="#f1d62c" stroke="#222" stroke-width="1.2" stroke-linejoin="round"/><path d="M1.4 4.6L4.7 1.6H14.4L11.4 4.6z" fill="#fff"/><path d="M12 5L14.8 2V11L12 14z" fill="#d9b91a"/><path d="M0.8 4.8H11.6V15M11.6 4.8L15.2 1" fill="none" stroke="#222" stroke-width="1.1"/><circle cx="6.2" cy="9.9" r="3.4" fill="#8fb0d8" stroke="#1a1a1a" stroke-width="1.2"/><path d="M3.6 9.2a2.8 2.8 0 0 0 4.9 2.6a3.6 3.6 0 0 1-4.9-2.6z" fill="#1f4a8c"/><circle cx="7.4" cy="8.7" r=".9" fill="#fff"/></svg>
<span class="t" style="left:68.20px;top:382.25px;font-size:11px;line-height:13px;letter-spacing:-0.350px;color:#111;">Díra2</span>
<svg style="left:19px;top:383px" width="7" height="10" viewBox="0 0 7 10"><path d="M1.2 1L5.2 5L1.2 9" fill="none" stroke="#9c9c9c" stroke-width="2.1"/></svg>
<svg style="left:32px;top:379px" width="16" height="16" viewBox="0 0 16 16"><path d="M3.2 8.6A5 5 0 0 1 12 4.2" fill="none" stroke="#e8241f" stroke-width="2"/><path d="M0.6 6.9L5.9 7.5L3 11.4z" fill="#e8241f"/><path d="M13 7.6A5 5 0 0 1 4.2 12" fill="none" stroke="#2d9b8e" stroke-width="2"/><path d="M15.6 9.300L10.300 8.700L13.200 4.800z" fill="#2d9b8e"/></svg>
<svg style="left:50px;top:379px" width="16" height="16" viewBox="0 0 16 16"><path d="M0.8 4.8L4.4 1H15.2V11.2L11.6 15H0.8z" fill="#f1d62c" stroke="#222" stroke-width="1.2" stroke-linejoin="round"/><path d="M1.4 4.6L4.7 1.6H14.4L11.4 4.6z" fill="#fff"/><path d="M12 5L14.8 2V11L12 14z" fill="#d9b91a"/><path d="M0.8 4.8H11.6V15M11.6 4.8L15.2 1" fill="none" stroke="#222" stroke-width="1.1"/><circle cx="6.2" cy="9.9" r="3.4" fill="#8fb0d8" stroke="#1a1a1a" stroke-width="1.2"/><path d="M3.6 9.2a2.8 2.8 0 0 0 4.9 2.6a3.6 3.6 0 0 1-4.9-2.6z" fill="#1f4a8c"/><circle cx="7.4" cy="8.7" r=".9" fill="#fff"/></svg>
<span class="t" style="left:50.40px;top:402.25px;font-size:11px;line-height:13px;letter-spacing:-0.425px;color:#111;">Díra3</span>
<svg style="left:19px;top:403px" width="7" height="10" viewBox="0 0 7 10"><path d="M1.2 1L5.2 5L1.2 9" fill="none" stroke="#9c9c9c" stroke-width="2.1"/></svg>
<svg style="left:32px;top:399px" width="16" height="16" viewBox="0 0 16 16"><path d="M0.8 4.8L4.4 1H15.2V11.2L11.6 15H0.8z" fill="#f1d62c" stroke="#222" stroke-width="1.2" stroke-linejoin="round"/><path d="M1.4 4.6L4.7 1.6H14.4L11.4 4.6z" fill="#fff"/><path d="M12 5L14.8 2V11L12 14z" fill="#d9b91a"/><path d="M0.8 4.8H11.6V15M11.6 4.8L15.2 1" fill="none" stroke="#222" stroke-width="1.1"/><circle cx="6.2" cy="9.9" r="3.4" fill="#8fb0d8" stroke="#1a1a1a" stroke-width="1.2"/><path d="M3.6 9.2a2.8 2.8 0 0 0 4.9 2.6a3.6 3.6 0 0 1-4.9-2.6z" fill="#1f4a8c"/><circle cx="7.4" cy="8.7" r=".9" fill="#fff"/></svg>
<span class="t" style="left:50.40px;top:422.25px;font-size:11px;line-height:13px;letter-spacing:-0.425px;color:#111;">Díra4</span>
<svg style="left:19px;top:423px" width="7" height="10" viewBox="0 0 7 10"><path d="M1.2 1L5.2 5L1.2 9" fill="none" stroke="#9c9c9c" stroke-width="2.1"/></svg>
<svg style="left:32px;top:419px" width="16" height="16" viewBox="0 0 16 16"><path d="M0.8 4.8L4.4 1H15.2V11.2L11.6 15H0.8z" fill="#f1d62c" stroke="#222" stroke-width="1.2" stroke-linejoin="round"/><path d="M1.4 4.6L4.7 1.6H14.4L11.4 4.6z" fill="#fff"/><path d="M12 5L14.8 2V11L12 14z" fill="#d9b91a"/><path d="M0.8 4.8H11.6V15M11.6 4.8L15.2 1" fill="none" stroke="#222" stroke-width="1.1"/><circle cx="6.2" cy="9.9" r="3.4" fill="#8fb0d8" stroke="#1a1a1a" stroke-width="1.2"/><path d="M3.6 9.2a2.8 2.8 0 0 0 4.9 2.6a3.6 3.6 0 0 1-4.9-2.6z" fill="#1f4a8c"/><circle cx="7.4" cy="8.7" r=".9" fill="#fff"/></svg>
<span class="t" style="left:50.40px;top:442.25px;font-size:11px;line-height:13px;letter-spacing:-0.187px;color:#111;">Konec ohnutého</span>
<svg style="left:32px;top:439px" width="16" height="16" viewBox="0 0 16 16"><defs><radialGradient id="ge" cx=".4" cy=".35" r=".7"><stop offset="0" stop-color="#ff6b6b"/><stop offset="1" stop-color="#d81e1e"/></radialGradient></defs><path d="M5 0.7h6L15.3 5v6L11 15.3H5L0.7 11V5z" fill="url(#ge)" stroke="#3a1414" stroke-width="1.1"/><path d="M4.6 4.6L11.4 11.4M11.4 4.6L4.6 11.4" stroke="#fff" stroke-width="2.3"/></svg>
<div class="a" style="left:34px;top:460px;width:34px;height:15px;background:#3a98fb;border:1px solid #b8324a"></div>
<span class="t" style="left:36.00px;top:462.25px;font-size:11px;line-height:13px;letter-spacing:-0.725px;color:#fff;">Rozvin</span>
<svg style="left:1px;top:465px" width="10" height="7" viewBox="0 0 10 7"><path d="M1 1.2L5 5.2L9 1.2" fill="none" stroke="#454545" stroke-width="2.2"/></svg>
<svg style="left:16.3px;top:460px" width="16" height="16" viewBox="0 0 16 16"><path d="M5 0.8H15.2V15.2H5V11.2H1V4.8H5z" fill="#5d9bd6" stroke="#16253a" stroke-width="1.3" stroke-linejoin="round"/><path d="M5 4.2H15M5 11.8H15" stroke="#9cc4ea" stroke-width="1"/><rect x="8.6" y="1.9" width="2.6" height="1" fill="#fff"/><rect x="8.6" y="13.1" width="2.6" height="1" fill="#fff"/></svg>
<span class="t" style="left:50.40px;top:482.25px;font-size:11px;line-height:13px;letter-spacing:-0.149px;color:#111;">Pohled: Hlavní</span>
<svg style="left:19px;top:483px" width="7" height="10" viewBox="0 0 7 10"><path d="M1.2 1L5.2 5L1.2 9" fill="none" stroke="#9c9c9c" stroke-width="2.1"/></svg>
<svg style="left:32px;top:479px" width="16" height="16" viewBox="0 0 16 16"><path d="M3.5 3v11h2.5M3.5 8h3M3.5 3h1" fill="none" stroke="#222" stroke-width="1.2"/><rect x="0.5" y="0.3" width="4.6" height="2.6" fill="#2b5fa8"/><rect x="6.5" y="4.6" width="4.8" height="2.6" fill="#2b5fa8"/><rect x="11.2" y="8.7" width="4.6" height="2.6" fill="#2b5fa8"/><rect x="6.5" y="12.6" width="4.8" height="2.6" fill="#2b5fa8"/><path d="M9 8.2v2h1.5" fill="none" stroke="#222" stroke-width="1"/></svg>
<span class="t" style="left:50.40px;top:502.25px;font-size:11px;line-height:13px;letter-spacing:-0.254px;color:#111;">Konec plochého</span>
<svg style="left:32px;top:499px" width="16" height="16" viewBox="0 0 16 16"><defs><radialGradient id="ge" cx=".4" cy=".35" r=".7"><stop offset="0" stop-color="#ff6b6b"/><stop offset="1" stop-color="#d81e1e"/></radialGradient></defs><path d="M5 0.7h6L15.3 5v6L11 15.3H5L0.7 11V5z" fill="url(#ge)" stroke="#3a1414" stroke-width="1.1"/><path d="M4.6 4.6L11.4 11.4M11.4 4.6L4.6 11.4" stroke="#fff" stroke-width="2.3"/></svg>
<div class="a" id="vp" style="left:358px;top:112px;width:1559px;height:1011px;overflow:hidden;background:linear-gradient(to bottom,#7787a2 0%,#8b95ab 18%,#98a1b4 33%,#9fa8ba 45%,#9ba3b5 58%,#9aa1b2 64%,#a0a5b4 68.5%,#aeb1bc 78%,#c0c1c7 88%,#cacbcf 97%,#cbccd0 100%)">
<div class="a" style="left:0;top:0;width:100%;height:100%;background:linear-gradient(to right,rgba(26,30,40,0.6) 0px,rgba(26,30,40,0.52) 50px,rgba(26,30,40,0.44) 100px,rgba(26,30,40,0.365) 150px,rgba(26,30,40,0.29) 200px,rgba(26,30,40,0.225) 242px,rgba(26,30,40,0.145) 300px,rgba(26,30,40,0.09) 342px,rgba(26,30,40,0.035) 420px,rgba(26,30,40,0.008) 520px,rgba(26,30,40,0) 600px),linear-gradient(to left,rgba(26,30,40,0.6) 0px,rgba(26,30,40,0.52) 50px,rgba(26,30,40,0.44) 100px,rgba(26,30,40,0.365) 150px,rgba(26,30,40,0.29) 200px,rgba(26,30,40,0.225) 242px,rgba(26,30,40,0.145) 300px,rgba(26,30,40,0.09) 342px,rgba(26,30,40,0.035) 420px,rgba(26,30,40,0.008) 520px,rgba(26,30,40,0) 600px);-webkit-mask-image:linear-gradient(to bottom,#000 0%,rgba(0,0,0,.84) 28%,rgba(0,0,0,.8) 43%,rgba(0,0,0,.76) 49%,rgba(0,0,0,.62) 58%,rgba(0,0,0,.52) 64%,rgba(0,0,0,.4) 69%,rgba(0,0,0,.18) 77%,rgba(0,0,0,.12) 100%);mask-image:linear-gradient(to bottom,#000 0%,rgba(0,0,0,.84) 28%,rgba(0,0,0,.8) 43%,rgba(0,0,0,.76) 49%,rgba(0,0,0,.62) 58%,rgba(0,0,0,.52) 64%,rgba(0,0,0,.4) 69%,rgba(0,0,0,.18) 77%,rgba(0,0,0,.12) 100%)"></div>
<div class="a" style="left:0;top:0;width:100%;height:100%;background:radial-gradient(ellipse 420px 300px at 0 0,rgba(26,30,40,.05) 0,rgba(26,30,40,.025) 60%,rgba(26,30,40,0) 100%),radial-gradient(ellipse 420px 300px at 100% 0,rgba(26,30,40,.05) 0,rgba(26,30,40,.025) 60%,rgba(26,30,40,0) 100%)"></div>
</div>
<svg class="a" style="left:0;top:0" width="1917" height="1172" viewBox="0 0 1917 1172"><path d="M817,141 H1459 V508 H1301 V516.5 H1316.5 L1357.5,557.5 V1094.5 H919 V557.5 L959.5,516.5 H975 V508 H817 Z M826.3,154 a3.7,3.7 0 1,0 7.4,0 a3.7,3.7 0 1,0 -7.4,0 Z M826.3,334 a3.7,3.7 0 1,0 7.4,0 a3.7,3.7 0 1,0 -7.4,0 Z M826.3,479 a3.7,3.7 0 1,0 7.4,0 a3.7,3.7 0 1,0 -7.4,0 Z M1441.3,154 a3.7,3.7 0 1,0 7.4,0 a3.7,3.7 0 1,0 -7.4,0 Z M1441.3,334 a3.7,3.7 0 1,0 7.4,0 a3.7,3.7 0 1,0 -7.4,0 Z M1441.3,479 a3.7,3.7 0 1,0 7.4,0 a3.7,3.7 0 1,0 -7.4,0 Z M927.8,656 a3.7,3.7 0 1,0 7.4,0 a3.7,3.7 0 1,0 -7.4,0 Z M927.8,862 a3.7,3.7 0 1,0 7.4,0 a3.7,3.7 0 1,0 -7.4,0 Z M927.8,1069 a3.7,3.7 0 1,0 7.4,0 a3.7,3.7 0 1,0 -7.4,0 Z M1340.3,656 a3.7,3.7 0 1,0 7.4,0 a3.7,3.7 0 1,0 -7.4,0 Z M1340.3,862 a3.7,3.7 0 1,0 7.4,0 a3.7,3.7 0 1,0 -7.4,0 Z M1340.3,1069 a3.7,3.7 0 1,0 7.4,0 a3.7,3.7 0 1,0 -7.4,0 Z M967.7,604.5 a2.3,2.3 0 1,0 4.6,0 a2.3,2.3 0 1,0 -4.6,0 Z M967.7,707.8 a2.3,2.3 0 1,0 4.6,0 a2.3,2.3 0 1,0 -4.6,0 Z M967.7,811 a2.3,2.3 0 1,0 4.6,0 a2.3,2.3 0 1,0 -4.6,0 Z M967.7,914.2 a2.3,2.3 0 1,0 4.6,0 a2.3,2.3 0 1,0 -4.6,0 Z M967.7,1017.4 a2.3,2.3 0 1,0 4.6,0 a2.3,2.3 0 1,0 -4.6,0 Z M1303.2,604.5 a2.3,2.3 0 1,0 4.6,0 a2.3,2.3 0 1,0 -4.6,0 Z M1303.2,707.8 a2.3,2.3 0 1,0 4.6,0 a2.3,2.3 0 1,0 -4.6,0 Z M1303.2,811 a2.3,2.3 0 1,0 4.6,0 a2.3,2.3 0 1,0 -4.6,0 Z M1303.2,914.2 a2.3,2.3 0 1,0 4.6,0 a2.3,2.3 0 1,0 -4.6,0 Z M1303.2,1017.4 a2.3,2.3 0 1,0 4.6,0 a2.3,2.3 0 1,0 -4.6,0 Z" fill="#0099db" fill-rule="evenodd"/><path d="M817,141 H1459 V508 H1301 V516.5 H1316.5 L1357.5,557.5 V1094.5 H919 V557.5 L959.5,516.5 H975 V508 H817 Z" fill="none" stroke="#003cf5" stroke-width="2" stroke-linejoin="miter"/><line x1="903" y1="142" x2="903" y2="507" stroke="#003cf5" stroke-width="1.8" stroke-dasharray="17 5 5.3 5" stroke-dashoffset="1.6"/><line x1="900.3" y1="144" x2="900.3" y2="507" stroke="#003cf5" stroke-width="1" stroke-dasharray="1 3.6" opacity=".85"/><line x1="905.7" y1="144" x2="905.7" y2="507" stroke="#003cf5" stroke-width="1" stroke-dasharray="1 3.6" opacity=".85"/><line x1="972" y1="142" x2="972" y2="507" stroke="#003cf5" stroke-width="1.8" stroke-dasharray="17 5 5.3 5" stroke-dashoffset="1.6"/><line x1="969.3" y1="144" x2="969.3" y2="507" stroke="#003cf5" stroke-width="1" stroke-dasharray="1 3.6" opacity=".85"/><line x1="974.7" y1="144" x2="974.7" y2="507" stroke="#003cf5" stroke-width="1" stroke-dasharray="1 3.6" opacity=".85"/><line x1="1304" y1="142" x2="1304" y2="507" stroke="#003cf5" stroke-width="1.8" stroke-dasharray="17 5 5.3 5" stroke-dashoffset="1.6"/><line x1="1301.3" y1="144" x2="1301.3" y2="507" stroke="#003cf5" stroke-width="1" stroke-dasharray="1 3.6" opacity=".85"/><line x1="1306.7" y1="144" x2="1306.7" y2="507" stroke="#003cf5" stroke-width="1" stroke-dasharray="1 3.6" opacity=".85"/><line x1="1373" y1="142" x2="1373" y2="507" stroke="#003cf5" stroke-width="1.8" stroke-dasharray="17 5 5.3 5" stroke-dashoffset="1.6"/><line x1="1370.3" y1="144" x2="1370.3" y2="507" stroke="#003cf5" stroke-width="1" stroke-dasharray="1 3.6" opacity=".85"/><line x1="1375.7" y1="144" x2="1375.7" y2="507" stroke="#003cf5" stroke-width="1" stroke-dasharray="1 3.6" opacity=".85"/><line x1="976" y1="512" x2="1300" y2="512" stroke="#003cf5" stroke-width="1.8" stroke-dasharray="17 5 5.3 5" stroke-dashoffset="1.6"/><line x1="977" y1="508" x2="1300" y2="508" stroke="#003cf5" stroke-width="1" stroke-dasharray="1 3.6" opacity=".85"/><line x1="977" y1="516.5" x2="1300" y2="516.5" stroke="#003cf5" stroke-width="1" stroke-dasharray="1 3.6" opacity=".85"/><circle cx="830" cy="154" r="9.7" fill="none" stroke="#003cf5" stroke-width="2.6"/><circle cx="830" cy="154" r="7.2" fill="none" stroke="#0568a8" stroke-width="2.6"/><circle cx="830" cy="154" r="4.9" fill="none" stroke="#003cf5" stroke-width="2.5"/><circle cx="830" cy="334" r="9.7" fill="none" stroke="#003cf5" stroke-width="2.6"/><circle cx="830" cy="334" r="7.2" fill="none" stroke="#0568a8" stroke-width="2.6"/><circle cx="830" cy="334" r="4.9" fill="none" stroke="#003cf5" stroke-width="2.5"/><circle cx="830" cy="479" r="9.7" fill="none" stroke="#003cf5" stroke-width="2.6"/><circle cx="830" cy="479" r="7.2" fill="none" stroke="#0568a8" stroke-width="2.6"/><circle cx="830" cy="479" r="4.9" fill="none" stroke="#003cf5" stroke-width="2.5"/><circle cx="1445" cy="154" r="9.7" fill="none" stroke="#003cf5" stroke-width="2.6"/><circle cx="1445" cy="154" r="7.2" fill="none" stroke="#0568a8" stroke-width="2.6"/><circle cx="1445" cy="154" r="4.9" fill="none" stroke="#003cf5" stroke-width="2.5"/><circle cx="1445" cy="334" r="9.7" fill="none" stroke="#003cf5" stroke-width="2.6"/><circle cx="1445" cy="334" r="7.2" fill="none" stroke="#0568a8" stroke-width="2.6"/><circle cx="1445" cy="334" r="4.9" fill="none" stroke="#003cf5" stroke-width="2.5"/><circle cx="1445" cy="479" r="9.7" fill="none" stroke="#003cf5" stroke-width="2.6"/><circle cx="1445" cy="479" r="7.2" fill="none" stroke="#0568a8" stroke-width="2.6"/><circle cx="1445" cy="479" r="4.9" fill="none" stroke="#003cf5" stroke-width="2.5"/><circle cx="931.5" cy="656" r="9.7" fill="none" stroke="#003cf5" stroke-width="2.6"/><circle cx="931.5" cy="656" r="7.2" fill="none" stroke="#0568a8" stroke-width="2.6"/><circle cx="931.5" cy="656" r="4.9" fill="none" stroke="#003cf5" stroke-width="2.5"/><circle cx="931.5" cy="862" r="9.7" fill="none" stroke="#003cf5" stroke-width="2.6"/><circle cx="931.5" cy="862" r="7.2" fill="none" stroke="#0568a8" stroke-width="2.6"/><circle cx="931.5" cy="862" r="4.9" fill="none" stroke="#003cf5" stroke-width="2.5"/><circle cx="931.5" cy="1069" r="9.7" fill="none" stroke="#003cf5" stroke-width="2.6"/><circle cx="931.5" cy="1069" r="7.2" fill="none" stroke="#0568a8" stroke-width="2.6"/><circle cx="931.5" cy="1069" r="4.9" fill="none" stroke="#003cf5" stroke-width="2.5"/><circle cx="1344" cy="656" r="9.7" fill="none" stroke="#003cf5" stroke-width="2.6"/><circle cx="1344" cy="656" r="7.2" fill="none" stroke="#0568a8" stroke-width="2.6"/><circle cx="1344" cy="656" r="4.9" fill="none" stroke="#003cf5" stroke-width="2.5"/><circle cx="1344" cy="862" r="9.7" fill="none" stroke="#003cf5" stroke-width="2.6"/><circle cx="1344" cy="862" r="7.2" fill="none" stroke="#0568a8" stroke-width="2.6"/><circle cx="1344" cy="862" r="4.9" fill="none" stroke="#003cf5" stroke-width="2.5"/><circle cx="1344" cy="1069" r="9.7" fill="none" stroke="#003cf5" stroke-width="2.6"/><circle cx="1344" cy="1069" r="7.2" fill="none" stroke="#0568a8" stroke-width="2.6"/><circle cx="1344" cy="1069" r="4.9" fill="none" stroke="#003cf5" stroke-width="2.5"/><circle cx="970" cy="604.5" r="3.6" fill="none" stroke="#003cf5" stroke-width="2.4"/><circle cx="970" cy="707.8" r="3.6" fill="none" stroke="#003cf5" stroke-width="2.4"/><circle cx="970" cy="811" r="3.6" fill="none" stroke="#003cf5" stroke-width="2.4"/><circle cx="970" cy="914.2" r="3.6" fill="none" stroke="#003cf5" stroke-width="2.4"/><circle cx="970" cy="1017.4" r="3.6" fill="none" stroke="#003cf5" stroke-width="2.4"/><circle cx="1305.5" cy="604.5" r="3.6" fill="none" stroke="#003cf5" stroke-width="2.4"/><circle cx="1305.5" cy="707.8" r="3.6" fill="none" stroke="#003cf5" stroke-width="2.4"/><circle cx="1305.5" cy="811" r="3.6" fill="none" stroke="#003cf5" stroke-width="2.4"/><circle cx="1305.5" cy="914.2" r="3.6" fill="none" stroke="#003cf5" stroke-width="2.4"/><circle cx="1305.5" cy="1017.4" r="3.6" fill="none" stroke="#003cf5" stroke-width="2.4"/></svg>
<svg style="left:1862px;top:116px" width="55" height="16" viewBox="0 0 55 16" fill="none"><path d="M3.2 10.6h10" stroke="#3d4352" stroke-width="3.6" opacity=".55"/><path d="M3.4 10.6h9.6" stroke="#fff" stroke-width="2"/><g stroke="#3d4352" opacity=".5" stroke-width="3.4"><rect x="23.4" y="5" width="6.2" height="6.6"/><path d="M26 3.2h6.2v6.8"/></g><rect x="23.4" y="5" width="6.2" height="6.6" stroke="#fff" stroke-width="1.8"/><path d="M25.6 2.6h6.6v7" stroke="#fff" stroke-width="1.4"/><path d="M44 4l8 8M52 4l-8 8" stroke="#3d4352" stroke-width="3.8" opacity=".5"/><path d="M44 4l8 8M52 4l-8 8" stroke="#fff" stroke-width="2.2"/></svg>
<div class="a" style="left:1824px;top:223.500px;width:62px;height:8px;border-radius:50%;background:radial-gradient(ellipse at center,rgba(40,45,60,.38) 0%,rgba(40,45,60,.18) 55%,rgba(40,45,60,0) 100%)"></div>
<div class="a" style="left:1828.7px;top:171.5px;width:52.8px;height:52.9px;background:linear-gradient(to bottom,#8f939f,#878b98);box-shadow:0 0 1px rgba(60,65,80,.6)"></div>
<div class="a" style="left:1838.2px;top:181.3px;width:33.8px;height:33.2px;background:linear-gradient(to bottom,#818694,#7b808e)"></div>
<svg style="left:1828px;top:187px" width="54" height="22" viewBox="0 0 54 22"><text x="27" y="16.300" text-anchor="middle" font-family="Liberation Sans, sans-serif" font-weight="bold" font-size="14.500" fill="#5a5f6f" stroke="#5a5f6f" stroke-width=".25" textLength="60.500" lengthAdjust="spacingAndGlyphs" transform="translate(27 0) scale(.8 1) translate(-27 0)">ZEPŘEDU</text></svg>
<div class="a" style="left:1882px;top:257px;width:33.5px;height:229.5px;border-radius:5px;background:linear-gradient(to right,#878b97,#898d99);border:1.3px solid #3b4151;box-shadow:inset 0 0 0 1px rgba(170,174,186,.55)"></div>
<svg style="left:1882px;top:257px" width="34" height="230" viewBox="0 0 34 230" fill="none"><circle cx="26" cy="7.1" r="3.7" fill="#a6a9b3"/><path d="M24.300 5.400l3.400 3.400M27.700 5.400l-3.400 3.400" stroke="#f2f3f5" stroke-width="1.200"/><path d="M16.800 22.200H26a1.800 1.800 0 0 1 1.800 1.800V33a10.900 10.900 0 1 1-11-10.800z" fill="#b9bcc5" stroke="#666b7a" stroke-width=".8"/><circle cx="16.800" cy="32" r="5.900" fill="#b1b4be" stroke="#666b7a" stroke-width="1.100"/><circle cx="16.800" cy="32" r="3.600" fill="#c2c5cd"/><path d="M12.700 36.300l-3.200 4.200M20.900 36.300l3.200 4.200" stroke="#666b7a" stroke-width="1"/><path d="M14 54h5.400l-2.700 3.200z" fill="#5a5f6f"/><path d="M3.500 61.500h26.500" stroke="#6d7282" stroke-width="1"/><path d="M11.500 90C9.500 87.500 8.500 85 7 83.500L5.600 81.200C5 80 6.200 78.800 7.600 79.600L10.800 82.300L11.600 82L11.200 72C11.100 70 13.900 69.800 14.100 72L14.600 79L15.300 79L15.200 70.300C15.200 68.200 18 68.200 18.100 70.300L18.400 79L19.100 79L19.600 71.500C19.700 69.600 22.400 69.800 22.300 71.800L21.900 80L22.500 80.300L24.300 75.200C25 73.400 27.500 74.200 26.900 76.200L24.600 84C23.800 87 22.800 88.600 21.600 90Z" fill="#c9ccd4" stroke="#737888" stroke-width=".8" stroke-linejoin="round"/><path d="M6.400 100.500h10l4 4v13.800H6.400z" fill="#c4c7cf"/><path d="M16.400 100.500v4h4" fill="#dfe1e6"/><circle cx="19.700" cy="114.500" r="4.400" fill="#a4a8b3" stroke="#d2d4da" stroke-width="1.100"/><path d="M23 118l4 4" stroke="#5e6373" stroke-width="2.200" stroke-linecap="round"/><path d="M23 118l3.700 3.700" stroke="#d2d4da" stroke-width=".7"/><path d="M14 132h5.400l-2.700 3.200z" fill="#5a5f6f"/><ellipse cx="16.700" cy="154" rx="11" ry="4.300" stroke="#5f6474" stroke-width="1.100"/><ellipse cx="16.700" cy="154" rx="4.300" ry="11" stroke="#5f6474" stroke-width="1.100"/><path d="M14.700 154h4M16.700 152v4" stroke="#5f6474" stroke-width="1"/><path d="M17.500 146.500l2.600 2.400l.4-3.400M24 150.300l-2.600 1.600l3 1.200" stroke="#5f6474" stroke-width="1" fill="none"/><path d="M14 174h5.400l-2.700 3.200z" fill="#5a5f6f"/><path d="M6.500 191l6-6.500v5.500l9.500-3.500v4.500z" fill="#b5b8c2" stroke="#7a7f8e" stroke-width=".7"/><rect x="5.400" y="191" width="22.600" height="15.300" fill="#c0c3cb" stroke="#7a7f8e" stroke-width=".8"/><rect x="9.500" y="196" width="14.500" height="6.400" fill="#9ea2ad" stroke="#5f6474" stroke-width="1"/><circle cx="26" cy="222.100" r="3.900" fill="#474c5b"/><path d="M23.800 220.700h4.400" stroke="#e6e7ea" stroke-width="1.100"/><path d="M23.900 222.300h4.200l-2.100 2.400z" fill="#e6e7ea"/></svg>
<svg style="left:395px;top:1025px" width="65" height="60" viewBox="395 1025 65 60"><path d="M410 1070V1049" stroke="#1fa41f" stroke-width="1.4"/><path d="M405.300 1049.800h9.400L410 1040.400z" fill="#169c16"/><path d="M410 1070.400h21" stroke="#c01818" stroke-width="1.400"/><path d="M430.600 1065.600v9.600l9.800-4.800z" fill="#a31212"/><circle cx="410" cy="1070.400" r="5.700" fill="#0a0aa8"/><circle cx="408.800" cy="1069" r="2.600" fill="#1616c8"/></svg>
<span class="t" style="left:406.30px;top:1027.64px;font-size:10.5px;line-height:13px;color:#3fdc5a;">Y</span>
<span class="t" style="left:442.80px;top:1064.04px;font-size:10.5px;line-height:13px;color:#e03030;">X</span>
<div class="a" style="left:61px;top:467.3px;width:231.3px;height:320.99999999999994px;background:rgba(211,211,211,.965);border-radius:5px;box-shadow:0.5px 1px 1.5px rgba(0,0,0,.35), inset 0 0 0 1px rgba(190,190,190,.55)"></div>
<span class="t" style="left:50.40px;top:481.65px;font-size:11px;line-height:13px;letter-spacing:-0.149px;color:rgba(120,120,120,.13);">Pohled: Hlavní</span>
<span class="t" style="left:50.40px;top:501.65px;font-size:11px;line-height:13px;letter-spacing:-0.177px;color:rgba(120,120,120,.13);">Konec plochého</span>
<div class="a" style="left:63px;top:492.1px;width:227.3px;height:1px;background:#c3c3c3"></div>
<div class="a" style="left:63px;top:493.1px;width:227.3px;height:1px;background:#dadada"></div>
<div class="a" style="left:63px;top:556.9px;width:227.3px;height:1px;background:#c3c3c3"></div>
<div class="a" style="left:63px;top:557.9px;width:227.3px;height:1px;background:#dadada"></div>
<div class="a" style="left:63px;top:622.0px;width:227.3px;height:1px;background:#c3c3c3"></div>
<div class="a" style="left:63px;top:623.0px;width:227.3px;height:1px;background:#dadada"></div>
<div class="a" style="left:63px;top:647.1px;width:227.3px;height:1px;background:#c3c3c3"></div>
<div class="a" style="left:63px;top:648.1px;width:227.3px;height:1px;background:#dadada"></div>
<div class="a" style="left:63px;top:671.7px;width:227.3px;height:1px;background:#c3c3c3"></div>
<div class="a" style="left:63px;top:672.7px;width:227.3px;height:1px;background:#dadada"></div>
<div class="a" style="left:63px;top:696.7px;width:227.3px;height:1px;background:#c3c3c3"></div>
<div class="a" style="left:63px;top:697.7px;width:227.3px;height:1px;background:#dadada"></div>
<div class="a" style="left:63px;top:762.0px;width:227.3px;height:1px;background:#c3c3c3"></div>
<div class="a" style="left:63px;top:763.0px;width:227.3px;height:1px;background:#dadada"></div>
<div class="a" style="left:62.5px;top:649.2px;width:228.3px;height:20.6px;background:linear-gradient(to bottom,#aecdf2 0%,#9fc0e8 30%,#86a8d4 65%,#6b8dba 100%)"></div>
<span class="t" style="left:87.60px;top:473.25px;font-size:11px;line-height:13px;letter-spacing:-0.055px;color:#0a0a0a;">O<u>p</u>akovat Uložit kopii jako...</span>
<span class="t" style="left:87.60px;top:497.85px;font-size:11px;line-height:13px;letter-spacing:0.046px;color:#0a0a0a;">Odstran<u>i</u>t</span>
<span class="t" style="left:87.60px;top:517.75px;font-size:11px;line-height:13px;letter-spacing:0.050px;color:#0a0a0a;">Vytvořit výkresový pohled</span>
<span class="t" style="left:87.60px;top:537.75px;font-size:11px;line-height:13px;letter-spacing:0.081px;color:#0a0a0a;">Otevřít výkres</span>
<span class="t" style="left:87.60px;top:562.65px;font-size:11px;line-height:13px;letter-spacing:-0.081px;color:#0a0a0a;">Upravit definici rozvinu</span>
<span class="t" style="left:87.60px;top:582.65px;font-size:11px;line-height:13px;letter-spacing:-0.186px;color:#0a0a0a;">O<u>d</u>měřit</span>
<span class="t" style="left:87.60px;top:603.05px;font-size:11px;line-height:13px;letter-spacing:-0.098px;color:#0a0a0a;"><u>V</u>ytvořit poznámku</span>
<span class="t" style="left:87.60px;top:628.25px;font-size:11px;line-height:13px;letter-spacing:-0.019px;color:#0a0a0a;"><u>H</u>ranice...</span>
<span class="t" style="left:87.60px;top:653.15px;font-size:11px;line-height:13px;letter-spacing:-0.078px;color:#0a0a0a;">Uložit <u>k</u>opii jako...</span>
<span class="t" style="left:87.60px;top:677.85px;font-size:11px;line-height:13px;letter-spacing:-0.208px;color:#0a0a0a;">Odložit aktualizaci</span>
<span class="t" style="left:87.60px;top:702.65px;font-size:11px;line-height:13px;letter-spacing:-0.156px;color:#0a0a0a;">Roz<u>b</u>alit všechny podřazené položky</span>
<span class="t" style="left:87.60px;top:722.95px;font-size:11px;line-height:13px;letter-spacing:-0.149px;color:#0a0a0a;"><u>S</u>balit všechny podřazené položky</span>
<span class="t" style="left:87.60px;top:742.95px;font-size:11px;line-height:13px;letter-spacing:-0.153px;color:#0a0a0a;">Nají<u>t</u> v okně</span>
<span class="t" style="left:87.60px;top:767.95px;font-size:11px;line-height:13px;letter-spacing:0.143px;color:#0a0a0a;"><u>J</u>ak...</span>
<span class="t" style="left:259.80px;top:517.75px;font-size:11px;line-height:13px;letter-spacing:0.074px;color:#6e6e6e;">Alt+C</span>
<span class="t" style="left:279.50px;top:582.65px;font-size:11px;line-height:13px;color:#6e6e6e;">M</span>
<span class="t" style="left:269.20px;top:742.95px;font-size:11px;line-height:13px;letter-spacing:-0.786px;color:#6e6e6e;">End</span>
<svg style="left:66px;top:516px" width="17" height="17" viewBox="0 0 17 17" fill="none"><rect x="1" y="2.5" width="14" height="13.5" rx="1.5" stroke="#222" stroke-width="1" stroke-dasharray="2.2 1.4"/><rect x="3.2" y="7" width="6.6" height="6.4" fill="#e6e6e6" stroke="#333" stroke-width="1"/><path d="M11.8 7v6.4M3.2 4.6h6.6" stroke="#333" stroke-width="1"/><path d="M13.2 0.8l0.9 1.7 1.9 0.3-1.4 1.3 0.4 1.9-1.8-0.9-1.7 0.9 0.3-1.9-1.3-1.3 1.8-0.3z" fill="#f08a1d"/></svg>
<svg style="left:66px;top:536px" width="17" height="17" viewBox="0 0 17 17" fill="none"><rect x="0.8" y="0.8" width="10.4" height="12" fill="#f2f2f2" stroke="#444" stroke-width="1"/><path d="M0.8 3.6h10.4M3.6 0.8v12" stroke="#8a8a8a" stroke-width=".9"/><path d="M5.8 16V9.6h3.2l1 1.2h5.4l-1.4 5.2z" fill="#f2b01e" stroke="#8a5a08" stroke-width=".9"/><path d="M7 16l1.6-3.8h7.6l-2 3.8z" fill="#fcd978" stroke="#8a5a08" stroke-width=".8"/></svg>
<svg style="left:66px;top:583px" width="17" height="12" viewBox="0 0 17 12" fill="none"><path d="M1.2 0.6v3.4M15.8 0.6v3.4M1.2 2.3h14.6" stroke="#333" stroke-width="1"/><rect x="1" y="5.8" width="15" height="4.8" fill="#f2b01e" stroke="#9a6408" stroke-width="1"/><path d="M3.5 6v2M6 6v2.6M8.5 6v2M11 6v2.6M13.5 6v2" stroke="#7a4e06" stroke-width=".8"/></svg>
<svg style="left:65px;top:740px" width="18" height="18" viewBox="0 0 18 18" fill="none"><circle cx="7.2" cy="7.2" r="6" fill="#f4f4f4" stroke="#555" stroke-width="1.1"/><path d="M11.6 11.6L16.4 16.4" stroke="#333" stroke-width="2.4" stroke-linecap="round"/><path d="M5.2 3.4v7.4l1.9-1.7 1.3 2.9 1.2-0.6-1.3-2.8h2.5z" fill="#fff" stroke="#222" stroke-width=".9" stroke-linejoin="round"/></svg>
<div class="a" style="left:354px;top:112px;width:4px;height:1035px;background:#525252"></div>
<div class="a" style="left:354px;top:1123px;width:1563px;height:24px;background:#5e5e5e"></div>
<div class="a" style="left:682px;top:1123px;width:116px;height:24px;background:#f5f5f5"></div>
<div class="a" style="left:478px;top:1123px;width:1px;height:24px;background:#707070"></div>
<span class="t" style="left:487.40px;top:1128.96px;font-size:12px;line-height:14px;letter-spacing:-0.062px;color:#f0f0f0;">Moje domovská...</span>
<span class="t" style="left:600.30px;top:1128.96px;font-size:12px;line-height:14px;letter-spacing:-0.623px;color:#f0f0f0;">F1_2_Stul.iam</span>
<span class="t" style="left:690.80px;top:1128.96px;font-size:12px;line-height:14px;letter-spacing:-0.122px;color:#333;">Kryt_predek.ipt</span>
<svg style="left:777.5px;top:1130.5px" width="9" height="9" viewBox="0 0 9 9"><path d="M1 1L8 8M8 1L1 8" stroke="#333" stroke-width="1.7"/></svg>
<svg style="left:360px;top:1126px" width="115" height="18" viewBox="0 0 115 18" fill="none" stroke="#e8e8e8" stroke-width="1.3"><path d="M2.6 2.6h9v6M2.6 2.6v6M5.6 5.6h9v6M5.6 5.6v6"/><rect x="8.6" y="8.6" width="9.5" height="7"/><rect x="26.6" y="2.6" width="5.5" height="5"/><rect x="35.1" y="2.6" width="5.5" height="5"/><rect x="26.6" y="10.4" width="5.5" height="5"/><rect x="35.1" y="10.4" width="5.5" height="5"/><rect x="50.6" y="2.6" width="15" height="5.4"/><rect x="50.6" y="10.2" width="15" height="5.4"/><rect x="74.6" y="2.6" width="5.6" height="13"/><rect x="82.6" y="2.6" width="5.6" height="13"/><path d="M101 12.5h10L106 5z" fill="#e8e8e8" stroke="none"/></svg>
<div class="a" style="left:0;top:1147px;width:1917px;height:25px;background:#f5f5f5"></div>
<span class="t" style="left:-1.50px;top:1153.16px;font-size:11.5px;line-height:14px;letter-spacing:-0.027px;color:#222;">Připraven</span>
<div class="a" style="left:1838px;top:1149px;width:1px;height:23px;background:#dcdcdc"></div>
<div class="a" style="left:1878px;top:1149px;width:1px;height:23px;background:#dcdcdc"></div>
<div class="a" style="left:1915px;top:1149px;width:1px;height:23px;background:#dcdcdc"></div>
<span class="t" style="left:1848.00px;top:1153.16px;font-size:11.5px;line-height:14px;color:#222;">1</span>
<span class="t" style="left:1885.50px;top:1153.16px;font-size:11.5px;line-height:14px;letter-spacing:0.208px;color:#222;">30</span>
</body></html>
